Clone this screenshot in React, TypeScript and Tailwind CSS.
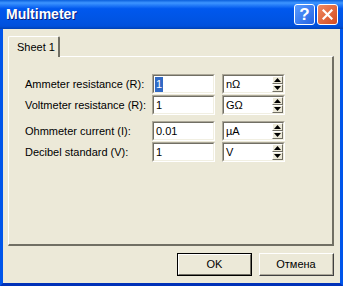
import React from 'react';

const rows = [
    { label: 'Ammeter resistance (R):', value: '1', unit: 'nΩ', selected: true, mt: 'mt-[17px]' },
    { label: 'Voltmeter resistance (R):', value: '1', unit: 'GΩ', selected: false, mt: 'mt-[1px]' },
    { label: 'Ohmmeter current (I):', value: '0.01', unit: 'µA', selected: false, mt: 'mt-[6px]' },
    { label: 'Decibel standard (V):', value: '1', unit: 'V', selected: false, mt: 'mt-[1px]' },
];

const Sunken: React.FC<{ className?: string; children: React.ReactNode }> = ({ className, children }) => (
    <div className={`border-t border-l border-t-[#aca899] border-l-[#aca899] border-b border-r border-b-white border-r-white ${className ?? ''}`}>
        <div className="h-full border-t border-l border-t-[#716f64] border-l-[#716f64] border-b border-r border-b-[#f1efe2] border-r-[#f1efe2] bg-white flex items-center">
            {children}
        </div>
    </div>
);

const Arrow: React.FC<{ up?: boolean }> = ({ up }) => (
    <svg width="7" height="4" viewBox="0 0 7 4">
        {up ? <path d="M3.5 0 L7 4 L0 4 Z" fill="#000" /> : <path d="M0 0 L7 0 L3.5 4 Z" fill="#000" />}
    </svg>
);

const SpinHalf: React.FC<{ up?: boolean }> = ({ up }) => (
    <div className="flex-1 bg-[#ece9d8] border-t border-l border-t-white border-l-white border-b border-r border-b-[#716f64] border-r-[#716f64] flex items-center justify-center">
        <Arrow up={up} />
    </div>
);

const Row: React.FC<{ r: typeof rows[number] }> = ({ r }) => (
    <div className={`flex items-center h-[20px] ${r.mt}`}>
        <div className="w-[127px] text-[11px] text-black leading-none">{r.label}</div>
        <Sunken className="w-[63px] h-[20px]">
            <span className={`ml-[1px] px-[1px] text-[11px] leading-[15px] ${r.selected ? 'bg-[#316ac5] text-white' : 'text-black'}`}>{r.value}</span>
        </Sunken>
        <Sunken className="ml-[7px] w-[63px] h-[20px]">
            <span className="flex-1 ml-[2px] text-[11px] text-black leading-none">{r.unit}</span>
            <div className="w-[11px] h-full flex flex-col">
                <SpinHalf up />
                <SpinHalf />
            </div>
        </Sunken>
    </div>
);

export default function App() {
    return (
        <div className="w-[343px] h-[286px] flex flex-col bg-white" style={{ fontFamily: '"Liberation Sans", Arial, sans-serif' }}>
            <div className="h-[29px] flex items-center pl-[6px] pr-[5px] bg-[linear-gradient(#0a5fdc_0%,#3d95ff_10%,#0058ee_30%,#0054e3_70%,#0050dc_90%,#0041b5_100%)]">
                <span className="flex-1 text-white font-bold text-[14px] [text-shadow:1px_1px_0_#0a1e7a]">Multimeter</span>
                <div className="w-[21px] h-[21px] rounded-[3px] border border-white bg-[linear-gradient(135deg,#5a9cff,#2463e2)] flex items-center justify-center text-white font-bold text-[17px] leading-none">?</div>
                <div className="ml-[2px] w-[21px] h-[21px] rounded-[3px] border border-white bg-[linear-gradient(135deg,#f08a62,#d44a20)] flex items-center justify-center">
                    <svg width="11" height="11" viewBox="0 0 11 11">
                        <path d="M1.5 1.5 L9.5 9.5 M9.5 1.5 L1.5 9.5" stroke="#fff" strokeWidth="2.2" strokeLinecap="square" />
                    </svg>
                </div>
            </div>
            <div className="flex-1 flex flex-col bg-[#ece9d8] border-l-[3px] border-r-[3px] border-b-[3px] border-l-[#0055ea] border-r-[#0055ea] border-b-[#0031b8] pt-[7px] pl-[5px] pr-[6px]">
                <div className="flex h-[21px]">
                    <div className="w-[52px] h-[21px] border-t border-l border-t-white border-l-white border-r-2 border-r-[#716f64] rounded-tl-[2px] rounded-tr-[2px] text-[11px] text-black flex items-center pl-[8px] relative z-10 bg-[#ece9d8]">
                        Sheet 1
                    </div>
                </div>
                <div className="-mt-[1px] h-[190px] border-t border-l border-t-white border-l-white border-r-2 border-b-2 border-r-[#716f64] border-b-[#716f64] pl-[16px]">
                    {rows.map((r, i) => <Row key={i} r={r} />)}
                </div>
                <div className="flex justify-end gap-[7px] mt-[7px]">
                    <button className="w-[75px] h-[23px] border border-black bg-[#ece9d8] text-[11px] text-black">
                        <div className="h-full border-t border-l border-t-white border-l-white border-b border-r border-b-[#716f64] border-r-[#716f64] flex items-center justify-center">OK</div>
                    </button>
                    <button className="w-[75px] h-[23px] border-t border-l border-t-white border-l-white border-b border-r border-b-[#404040] border-r-[#404040] bg-[#ece9d8] text-[11px] text-black">
                        <div className="h-full border-b border-r border-b-[#aca899] border-r-[#aca899] flex items-center justify-center">Отмена</div>
                    </button>
                </div>
            </div>
        </div>
    );
}
